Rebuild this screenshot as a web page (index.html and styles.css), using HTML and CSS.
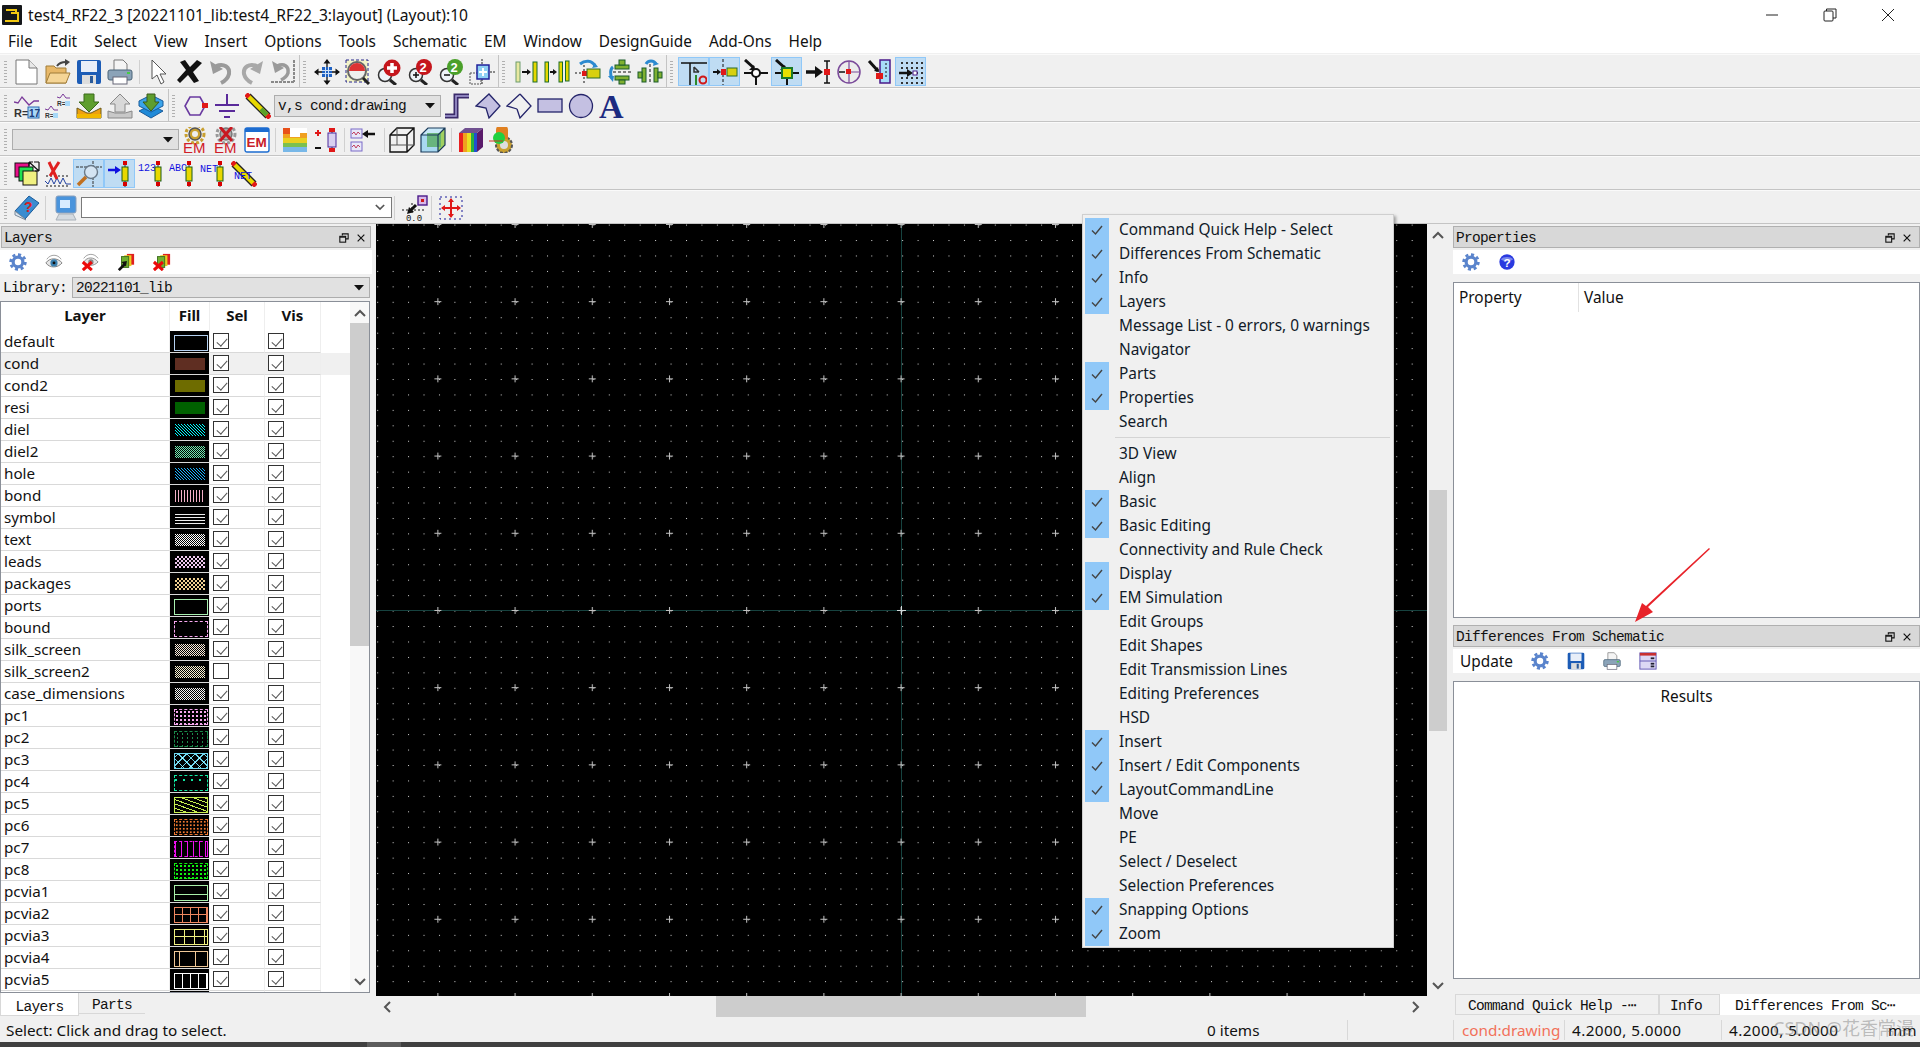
FILE: index.html
```html
<!DOCTYPE html>
<html lang="en">
<head>
<meta charset="utf-8">
<title>test4_RF22_3 Layout</title>
<link rel="stylesheet" href="styles.css">
</head>
<body>
<svg class="sprite" xmlns="http://www.w3.org/2000/svg">
<defs>
<symbol id="new" viewBox="0 0 26 26"><path d="M2 1h13l8 8v16H2z" fill="#fff" stroke="#777"/><path d="M15 1v8h8" fill="#e8e8e8" stroke="#777"/></symbol>
<symbol id="open" viewBox="0 0 26 26"><path d="M1 24V7h8l2 2h10v15z" fill="#e8b868" stroke="#a07c38"/><path d="M1 24l4-10h20l-4 10z" fill="#f5d596" stroke="#a07c38"/><path d="M12 7c2-3 5-4 9-4" stroke="#444" stroke-width="2" fill="none"/><path d="M20 0l5 3-5 4z" fill="#444"/></symbol>
<symbol id="save" viewBox="0 0 26 26"><rect x="1" y="1" width="24" height="24" rx="2" fill="#1c5cb6"/><rect x="5" y="2" width="16" height="11" fill="#e8eef8"/><rect x="6" y="16" width="14" height="9" fill="#ddd"/><rect x="14" y="17" width="3" height="7" fill="#2a5a9a"/></symbol>
<symbol id="print" viewBox="0 0 26 26"><path d="M7 1h9l4 4v7H7z" fill="#f4f4f4" stroke="#7a7a7a"/><rect x="1" y="11" width="24" height="10" rx="2" fill="#8ba3b8" stroke="#4a6478"/><rect x="6" y="18" width="14" height="7" fill="#fff" stroke="#667"/><rect x="20" y="13" width="3" height="2" fill="#4c4"/></symbol>
<symbol id="cursor" viewBox="0 0 26 26"><path d="M6 1l14 14h-6l4 8-3 2-4-9-5 4z" fill="#fff" stroke="#555"/></symbol>
<symbol id="x" viewBox="0 0 26 26"><path d="M3 3l5-2 5 7 7-7 5 3-9 9 6 9-5 2-6-8-8 8-3-3 9-10z" fill="#111"/></symbol>
<symbol id="undo" viewBox="0 0 26 26"><path d="M2 2l3 13 10-5z" fill="#9a9a9a"/><path d="M8 7c8-3 14 1 13 8-1 4-4 7-8 9" stroke="#9a9a9a" stroke-width="4" fill="none"/></symbol>
<symbol id="redo" viewBox="0 0 26 26"><path d="M24 2l-3 13-10-5z" fill="#a8a8a8"/><path d="M18 7c-8-3-14 1-13 8 1 4 4 7 8 9" stroke="#a8a8a8" stroke-width="4" fill="none"/></symbol>
<symbol id="undo2" viewBox="0 0 26 26"><path d="M2 2l3 12 9-5z" fill="#9a9a9a"/><path d="M7 7c7-3 12 0 11 7-1 3-3 5-7 7" stroke="#9a9a9a" stroke-width="3.5" fill="none"/><path d="M24 1v22M1 23h23" stroke="#8a8a8a" stroke-width="2" stroke-dasharray="3 1"/></symbol>
<symbol id="pan" viewBox="0 0 26 26"><path d="M13 1v24M1 13h24" stroke="#111" stroke-width="1.3"/><path d="M13 0l3.500 4.500h-7zM13 26l3.500-4.500h-7zM0 13l4.500-3.500v7zM26 13l-4.500-3.500v7z" fill="#111"/><rect x="8" y="8" width="10" height="10" fill="#1f62c4"/><path d="M11.500 8v10M14.500 8v10M8 11.500h10M8 14.500h10" stroke="#cfe0f5"/></symbol>
<symbol id="zfit" viewBox="0 0 26 26"><rect x="1" y="1" width="22" height="22" fill="#f2f3c8" stroke="#24248a" stroke-dasharray="3 2"/><circle cx="12" cy="12" r="9" fill="#eee" stroke="#666" stroke-width="2"/><path d="M12 12V4a8 8 0 0 0-8 8z" fill="#d33"/><path d="M12 12V4a8 8 0 0 1 8 8z" fill="#d33"/><path d="M18 19l6 6" stroke="#222" stroke-width="3"/></symbol>
<symbol id="zin" viewBox="0 0 26 26"><circle cx="9" cy="16" r="6.500" fill="#eef3f8" stroke="#333" stroke-width="1.5"/><path d="M14 21l6 5" stroke="#222" stroke-width="3"/><circle cx="16" cy="9" r="8.500" fill="#c5161c"/><path d="M16 4v10M11 9h10" stroke="#fff" stroke-width="3.5"/></symbol>
<symbol id="z2" viewBox="0 0 26 26"><circle cx="9" cy="16" r="6.500" fill="#eef3f8" stroke="#333" stroke-width="1.5"/><path d="M14 21l6 5" stroke="#222" stroke-width="3"/><path d="M6 16h6M9 13v6" stroke="#111" stroke-width="1.5"/><circle cx="17" cy="8" r="8" fill="#c5161c"/><text class="it itb" x="12.500" y="13" font-size="13" fill="#fff">2</text></symbol>
<symbol id="z2m" viewBox="0 0 26 26"><circle cx="9" cy="16" r="6.500" fill="#eef3f8" stroke="#333" stroke-width="1.5"/><path d="M14 21l6 5" stroke="#222" stroke-width="3"/><path d="M6 16h6" stroke="#111" stroke-width="1.5"/><circle cx="17" cy="8" r="8" fill="#4aa02a"/><text class="it itb" x="12.500" y="13" font-size="13" fill="#fff">2</text></symbol>
<symbol id="zc" viewBox="0 0 26 26"><path d="M13 0v6M13 20v6M18 13h8" stroke="#222" stroke-dasharray="2 1"/><rect x="1" y="14" width="11" height="11" fill="none" stroke="#555" stroke-dasharray="2 1"/><rect x="8" y="6" width="12" height="14" fill="#8fd0f4" stroke="#20209a" stroke-width="1.5"/><path d="M14 9v8M10 13h8" stroke="#fff" stroke-width="2"/></symbol>

<symbol id="a1" viewBox="0 0 26 26"><rect x="3" y="3" width="4" height="20" fill="#e8e8a0" stroke="#6c9c6c"/><rect x="20" y="3" width="4" height="20" fill="#e6d800" stroke="#1a6a2a"/><path d="M9 13h6" stroke="#111" stroke-width="2"/><path d="M18 13l-4-3v6z" fill="#111"/></symbol>
<symbol id="a2" viewBox="0 0 26 26"><rect x="1" y="3" width="3.500" height="20" fill="#e6d800" stroke="#1a6a2a"/><rect x="15" y="3" width="3.500" height="20" fill="#e6d800" stroke="#1a6a2a"/><rect x="21.500" y="2" width="3.500" height="20" fill="#e6d800" stroke="#1a6a2a"/><path d="M6 13h4" stroke="#111" stroke-width="2"/><path d="M13 13l-4-3v6z" fill="#111"/></symbol>
<symbol id="a3" viewBox="0 0 26 26"><path d="M5 5c5-4 12-4 15 2" stroke="#2c8ad0" stroke-width="3" fill="none"/><path d="M17 9l6-1-3-4z" fill="#2c8ad0"/><path d="M0 14h8M9 6v18" stroke="#111" stroke-dasharray="2 2"/><rect x="7" y="12" width="5" height="5" fill="#e01818"/><rect x="12" y="10" width="13" height="9" fill="#d8d010" stroke="#2a6a2a"/></symbol>
<symbol id="a4" viewBox="0 0 26 26"><path d="M7 8c-3 2-3 8-1 11" stroke="#2c8ad0" stroke-width="3" fill="none"/><path d="M2 17l6 0-1 6z" fill="#2c8ad0"/><rect x="9" y="6" width="14" height="4" fill="#7fb030" stroke="#1a5a2a"/><rect x="13" y="1" width="6" height="5" fill="#7fb030" stroke="#1a5a2a"/><path d="M7 13h19" stroke="#111" stroke-dasharray="3 2"/><rect x="9" y="17" width="14" height="4" fill="#7fb030" stroke="#1a5a2a"/><rect x="13" y="21" width="6" height="4" fill="#7fb030" stroke="#1a5a2a"/></symbol>
<symbol id="a5" viewBox="0 0 26 26"><path d="M9 5c2-4 8-4 10 0" stroke="#2c8ad0" stroke-width="3" fill="none"/><path d="M16 7l6-2-5-3z" fill="#2c8ad0"/><path d="M13 5v20" stroke="#111" stroke-dasharray="3 2"/><rect x="5" y="9" width="4" height="14" fill="#7fb030" stroke="#1a5a2a"/><rect x="1" y="13" width="4" height="6" fill="#7fb030" stroke="#1a5a2a"/><rect x="17" y="9" width="4" height="14" fill="#7fb030" stroke="#1a5a2a"/><rect x="21" y="13" width="4" height="6" fill="#7fb030" stroke="#1a5a2a"/></symbol>
<symbol id="s1" viewBox="0 0 26 26"><path d="M0 4h26M9 4v22" stroke="#111" stroke-width="1.5"/><path d="M13 8l5 5M13 8v5h5" stroke="#333" stroke-width="1.5" fill="none"/><path d="M15 16v10" stroke="#2a8a2a" stroke-width="2"/><circle cx="22" cy="21" r="3.500" fill="none" stroke="#d01818" stroke-width="2"/></symbol>
<symbol id="s2" viewBox="0 0 26 26"><path d="M11 0v26" stroke="#111" stroke-dasharray="3 2"/><path d="M1 13h5" stroke="#111" stroke-width="2"/><path d="M9 13l-4-3v6z" fill="#111"/><rect x="9" y="10" width="5" height="6" fill="#e01818"/><rect x="15" y="9" width="10" height="8" fill="#d8d010" stroke="#2a6a2a"/></symbol>
<symbol id="s3" viewBox="0 0 26 26"><path d="M1 14h24M13 14v12" stroke="#111" stroke-width="2"/><path d="M2 1l9 8" stroke="#111" stroke-width="3"/><path d="M12 11l-6 0 5-5z" fill="#111"/><circle cx="13" cy="14" r="4" fill="#fff" stroke="#111" stroke-width="2"/></symbol>
<symbol id="s4" viewBox="0 0 26 26"><path d="M1 14h24M13 14v12" stroke="#111" stroke-width="2"/><path d="M2 1l9 8" stroke="#111" stroke-width="3"/><path d="M12 11l-6 0 5-5z" fill="#111"/><rect x="8" y="9" width="10" height="10" fill="#e8e000" stroke="#1a7a2a" stroke-width="2"/></symbol>
<symbol id="s5" viewBox="0 0 26 26"><path d="M19 2h6M22 2v22M19 24h6" stroke="#111" stroke-width="1.5"/><path d="M1 13h10" stroke="#111" stroke-width="3.5"/><path d="M18 13l-8-6v12z" fill="#111"/><rect x="19" y="10" width="6" height="6" fill="#e01818"/></symbol>
<symbol id="s6" viewBox="0 0 26 26"><circle cx="13" cy="13" r="11" fill="#ececec" stroke="#7a4a9a" stroke-width="1.5"/><path d="M13 2v22M13 13h11" stroke="#7a4a9a" stroke-width="1.2"/><path d="M3 13h6" stroke="#111" stroke-width="1.5"/><rect x="10" y="10" width="5" height="5" fill="#e01818"/></symbol>
<symbol id="s7" viewBox="0 0 26 26"><rect x="13" y="1" width="10" height="23" fill="#a8ddf8" stroke="#4a1a8a" stroke-width="1.5"/><path d="M19 4v16" stroke="#111" stroke-dasharray="2 2"/><path d="M2 2l9 10" stroke="#111" stroke-width="3"/><path d="M12 13l-5-1 4-4z" fill="#111"/><rect x="9" y="14" width="7" height="6" fill="#e01818"/></symbol>
<symbol id="s8" viewBox="0 0 26 26"><g fill="#333"><rect x="3" y="3" width="2" height="2"/><rect x="8" y="3" width="2" height="2"/><rect x="13" y="3" width="2" height="2"/><rect x="18" y="3" width="2" height="2"/><rect x="23" y="3" width="2" height="2"/><rect x="3" y="8" width="2" height="2"/><rect x="8" y="8" width="2" height="2"/><rect x="13" y="8" width="2" height="2"/><rect x="18" y="8" width="2" height="2"/><rect x="23" y="8" width="2" height="2"/><rect x="18" y="13" width="2" height="2"/><rect x="23" y="13" width="2" height="2"/><rect x="3" y="18" width="2" height="2"/><rect x="8" y="18" width="2" height="2"/><rect x="13" y="18" width="2" height="2"/><rect x="18" y="18" width="2" height="2"/><rect x="23" y="18" width="2" height="2"/><rect x="3" y="23" width="2" height="2"/><rect x="8" y="23" width="2" height="2"/><rect x="13" y="23" width="2" height="2"/><rect x="18" y="23" width="2" height="2"/><rect x="23" y="23" width="2" height="2"/></g><path d="M1 14h9" stroke="#111" stroke-width="2.5"/><path d="M15 14l-6-4v8z" fill="#111"/><rect x="15" y="12" width="4" height="4" fill="#fff" stroke="#4a1a8a"/></symbol>

<symbol id="r17" viewBox="0 0 26 26"><path d="M0 9l4 1 4-6 7 8 5-4h5" stroke="#7a3a9a" stroke-width="1.3" fill="none"/><text class="it itb" x="0" y="24" font-size="11" fill="#333">R=</text><rect x="14" y="14" width="11" height="11" fill="#a8d8f8" stroke="#2a6ab0"/><text class="it itb" x="15" y="24" font-size="10" fill="#1a3a7a">17</text></symbol>
<symbol id="r17s" viewBox="0 0 26 26"><path d="M12 4l3 1 3-4 3 4h4" stroke="#7a3a9a" fill="none"/><text class="it itb" x="12" y="13" font-size="6.500" fill="#333">R=</text><rect x="20" y="8" width="5" height="5" fill="#a8d8f8"/><path d="M0 16l3 1 3-4 3 4h4" stroke="#7a3a9a" fill="none"/><text class="it itb" x="0" y="25" font-size="6.500" fill="#333">R=</text><rect x="8" y="20" width="5" height="5" fill="#a8d8f8"/></symbol>
<symbol id="dn" viewBox="0 0 26 26"><path d="M8 1h10v8h5L13 19 3 9h5z" fill="#5e9e2e" stroke="#3a6a1a"/><path d="M1 15l10 5h4l10-5v10H1z" fill="#eea010" stroke="#6a5a1a"/><rect x="1" y="21" width="24" height="4" fill="#f2b800"/></symbol>
<symbol id="up" viewBox="0 0 26 26"><path d="M13 1l10 10h-5v8H8v-8H3z" fill="#d8d8d8" stroke="#888"/><path d="M1 18l7 2h10l7-2v7H1z" fill="#c8c8c8" stroke="#888"/></symbol>
<symbol id="dnb" viewBox="0 0 26 26"><path d="M13 12l12 6-12 7-12-7z" fill="#1f8ad8" stroke="#185a9a"/><path d="M13 2l12 6v5l-12 6-12-6V8z" fill="#3aa4ea" stroke="#185a9a"/><path d="M9 1h8v8h4l-8 9-8-9h4z" fill="#5e9e2e" stroke="#3a5a1a"/></symbol>
<symbol id="hex" viewBox="0 0 26 26"><path d="M7 4h10l5 9-5 9H7L2 13z" fill="none" stroke="#6a3aa0" stroke-width="1.6"/><rect x="19" y="10" width="6" height="5" fill="#e01818"/></symbol>
<symbol id="gnd" viewBox="0 0 26 26"><path d="M13 1v11M1 12h24M5 18h16M10 24h6" stroke="#5a2a9a" stroke-width="2"/></symbol>
<symbol id="wire" viewBox="0 0 26 26"><path d="M3 3l20 20" stroke="#222" stroke-width="7"/><path d="M3 3l20 20" stroke="#e8d800" stroke-width="4.5"/><path d="M16 16l6 6" stroke="#5aa02a" stroke-width="4.5"/><path d="M1 1l3 3M22 22l3 3" stroke="#e01818" stroke-width="5"/></symbol>
<symbol id="step" viewBox="0 0 26 26"><path d="M1 23h11V3h13" fill="none" stroke="#3a2a6a" stroke-width="5"/><path d="M1 23h11V3h13" fill="none" stroke="#a8a0d8" stroke-width="1.5"/></symbol>
<symbol id="poly" viewBox="0 0 26 26"><path d="M14 1l11 12-11 12-3-10-10-2z" fill="#c4c0e2" stroke="#24246a" stroke-width="1.3"/></symbol>
<symbol id="polyo" viewBox="0 0 26 26"><path d="M14 1l11 12-11 12-3-9" fill="none" stroke="#24246a" stroke-width="1.3"/><path d="M11 16l-10-3L14 1" fill="none" stroke="#24246a" stroke-width="1.3"/></symbol>
<symbol id="rc" viewBox="0 0 26 26"><rect x="1" y="6" width="24" height="13" fill="#c4c0e2" stroke="#24246a" stroke-width="1.3"/></symbol>
<symbol id="ci" viewBox="0 0 26 26"><circle cx="13" cy="13" r="11.500" fill="#c4c0e2" stroke="#24246a" stroke-width="1.3"/></symbol>
<symbol id="aa" viewBox="0 0 26 26"><text class="itser" x="0" y="25" font-size="34" fill="#1c2a80">A</text></symbol>

<symbol id="emg" viewBox="0 0 26 26"><circle cx="13" cy="7" r="6" fill="#c9a030" stroke="#555" stroke-width="1.5"/><circle cx="13" cy="7" r="9" fill="none" stroke="#c9a030" stroke-width="3" stroke-dasharray="3 2"/><circle cx="13" cy="7" r="3" fill="#eee"/><text class="it" x="1" y="26" font-size="15" fill="#d0202a">EM</text></symbol>
<symbol id="emx" viewBox="0 0 26 26"><circle cx="13" cy="7" r="6" fill="#aaa" stroke="#777" stroke-width="1.5"/><circle cx="13" cy="7" r="9" fill="none" stroke="#999" stroke-width="3" stroke-dasharray="3 2"/><path d="M7 0l12 14M19 0L7 14" stroke="#c81820" stroke-width="3"/><text class="it" x="1" y="26" font-size="15" fill="#d0202a">EM</text></symbol>
<symbol id="emb" viewBox="0 0 26 26"><rect x="1" y="1" width="24" height="24" rx="2" fill="#fff" stroke="#1c6cd0" stroke-width="1.4"/><rect x="1" y="1" width="24" height="4" fill="#1c6cd0"/><text class="it itb" x="2.500" y="20" font-size="13.500" fill="#c8202a">EM</text></symbol>
<symbol id="lay" viewBox="0 0 26 26"><rect x="1" y="1" width="24" height="24" fill="#fff"/><path d="M1 1h7v6H1z" fill="#e8501a"/><path d="M18 6h7v5h-7z" fill="#f0a020"/><path d="M1 7h7v4H1zM8 11h17v-1H8z" fill="#f0a020"/><path d="M1 11h24v5H1z" fill="#e8d020"/><path d="M1 16h24v4H1z" fill="#7ac050"/><path d="M1 20h24v5H1z" fill="#78b8e8"/></symbol>
<symbol id="cmp" viewBox="0 0 26 26"><path d="M19 1v24" stroke="#333"/><rect x="16" y="1" width="6" height="4" fill="#e01818"/><rect x="15" y="6" width="8" height="14" fill="#d8d0f0" stroke="#4a2a9a"/><rect x="16" y="21" width="6" height="4" fill="#e01818"/><path d="M2 6h6M5 3v6" stroke="#e01818" stroke-width="2"/><path d="M2 21h6" stroke="#111" stroke-width="2"/></symbol>
<symbol id="cmpa" viewBox="0 0 26 26"><rect x="1" y="2" width="11" height="9" fill="#e8e8f8" stroke="#7a6ac8"/><path d="M2 7l2-2 2 3 2-3 2 2" stroke="#c04060" fill="none"/><rect x="1" y="15" width="11" height="9" fill="#e8e8f8" stroke="#7a6ac8"/><path d="M2 20l2-2 2 3 2-3 2 2" stroke="#c04060" fill="none"/><path d="M17 7h8" stroke="#111" stroke-width="2.5"/><path d="M12 7l6-4v8z" fill="#111"/></symbol>
<symbol id="cube" viewBox="0 0 26 26"><path d="M1 8l7-7h17v17l-7 7H1zM1 8h17v17M18 8l7-7" fill="none" stroke="#111" stroke-width="1.4"/><path d="M8 1v17H1M8 18h17" fill="none" stroke="#555"/></symbol>
<symbol id="cubec" viewBox="0 0 26 26"><path d="M1 8l7-7h17L18 8z" fill="#c8e8f8"/><path d="M18 8l7-7v17l-7 7z" fill="#a0d060"/><rect x="1" y="8" width="17" height="17" fill="#a8d8f0"/><rect x="7" y="6" width="14" height="14" fill="#60b070" opacity=".9"/><path d="M1 8l7-7h17v17l-7 7H1zM1 8h17v17M18 8l7-7" fill="none" stroke="#1a3a5a" stroke-width="1.2"/></symbol>
<symbol id="rain" viewBox="0 0 26 26"><rect x="1" y="6" width="4" height="19" fill="#e82020"/><rect x="5" y="6" width="4" height="19" fill="#f0a020"/><rect x="9" y="6" width="4" height="19" fill="#e8e020"/><rect x="13" y="6" width="3" height="19" fill="#28b040"/><rect x="16" y="6" width="3" height="19" fill="#2050d0"/><path d="M19 6l6-5v19l-6 5z" fill="#5a1a6a"/><path d="M1 6l6-5h18l-6 5z" fill="#705090"/></symbol>
<symbol id="gled" viewBox="0 0 26 26"><circle cx="15" cy="18" r="8" fill="#c9a030" stroke="#555" stroke-dasharray="3 1.5" stroke-width="2"/><circle cx="15" cy="18" r="4" fill="#ddd"/><path d="M7 3a6 6 0 0 1 12 0v9H7z" fill="#e08020"/><circle cx="10" cy="11" r="6" fill="#20d040"/><path d="M0 14h14" stroke="#d03020"/></symbol>

<symbol id="m1" viewBox="0 0 26 26"><rect x="1" y="2" width="14" height="14" fill="#e8108a" stroke="#111"/><rect x="5" y="6" width="14" height="14" fill="#20e050" stroke="#111"/><rect x="9" y="10" width="14" height="14" fill="#f0f080" stroke="#111"/><path d="M15 1l10 9M25 1v5M25 1h-5M15 1v4M15 1h4M25 10v-4M25 10h-4" stroke="#111" stroke-width="1.2" fill="none"/></symbol>
<symbol id="m2" viewBox="0 0 26 26"><path d="M0 20l3 3 3-6 3 6 3-6 3 6 3-6 3 6h5" stroke="#2040a0" fill="none"/><path d="M1 15h24M1 25h24" stroke="#111" stroke-dasharray="2 2"/><path d="M4 1l8 17M14 1L5 15" stroke="#e02020" stroke-width="3"/></symbol>
<symbol id="m3" viewBox="0 0 26 26"><path d="M0 6h26M17 0v26" stroke="#333" stroke-dasharray="3 1"/><circle cx="15" cy="11" r="6.500" fill="#d4e4f2" stroke="#6a7a8a" stroke-width="1.4"/><path d="M10 16l-8 8" stroke="#c07020" stroke-width="3.5"/></symbol>
<symbol id="m4" viewBox="0 0 26 26"><path d="M1 9h8" stroke="#1010e0" stroke-width="2.5"/><path d="M14 9l-6-4v8z" fill="#1010e0"/><path d="M18 0v26" stroke="#333"/><rect x="16" y="0" width="4" height="4" fill="#d80000"/><rect x="15" y="6" width="6" height="14" fill="#e8d800" stroke="#1a5a1a"/><rect x="16" y="21" width="4" height="4" fill="#d80000"/></symbol>
<symbol id="m5" viewBox="0 0 26 26"><text class="itm" x="0" y="10" font-size="10">123</text><path d="M20 0v26" stroke="#333"/><rect x="18" y="0" width="4" height="4" fill="#d80000"/><rect x="17" y="6" width="6" height="14" fill="#e8d800" stroke="#1a5a1a"/><rect x="18" y="21" width="4" height="4" fill="#d80000"/></symbol>
<symbol id="m6" viewBox="0 0 26 26"><text class="itm" x="0" y="10" font-size="10">ABC</text><path d="M20 0v26" stroke="#333"/><rect x="18" y="0" width="4" height="4" fill="#d80000"/><rect x="17" y="6" width="6" height="14" fill="#e8d800" stroke="#1a5a1a"/><rect x="18" y="21" width="4" height="4" fill="#d80000"/></symbol>
<symbol id="m7" viewBox="0 0 26 26"><text class="itm" x="0" y="11" font-size="10">NET</text><path d="M20 0v26" stroke="#333"/><rect x="18" y="0" width="4" height="4" fill="#d80000"/><rect x="17" y="6" width="6" height="14" fill="#e8d800" stroke="#1a5a1a"/><rect x="18" y="21" width="4" height="4" fill="#d80000"/></symbol>
<symbol id="m8" viewBox="0 0 26 26"><path d="M3 3l20 20" stroke="#222" stroke-width="7"/><path d="M3 3l20 20" stroke="#e8d800" stroke-width="4.5"/><path d="M1 1l3 3M22 22l3 3" stroke="#e01818" stroke-width="5"/><text class="itm" x="3" y="18" font-size="10">NET</text></symbol>

<symbol id="book" viewBox="0 0 26 26"><path d="M1 16L15 1l10 7-14 16z" fill="#3a8cd0" stroke="#1a5a9a"/><path d="M1 16l10 8 1 1-11-5z" fill="#d8e4f0" stroke="#7a8a9a"/><text class="it itb" x="10" y="17" font-size="14" fill="#d82020">?</text></symbol>
<symbol id="mon" viewBox="0 0 26 26"><rect x="3" y="1" width="20" height="17" rx="2" fill="#4a94dc" stroke="#8aa0bc"/><rect x="7" y="5" width="10" height="8" fill="#d8ecff"/><path d="M6 19h14l3 6H3z" fill="#d4dae0" stroke="#a8b0b8"/></symbol>
<symbol id="org" viewBox="0 0 26 26"><rect x="16" y="1" width="9" height="9" fill="#d8b8e8" stroke="#4a1a8a" stroke-width="1.4"/><rect x="19" y="4" width="3" height="3" fill="#d01818"/><path d="M14 10l-7 7" stroke="#111" stroke-width="3"/><path d="M5 19l2-7 5 5z" fill="#111"/><path d="M10 8v10M0 15h24" stroke="#111" stroke-dasharray="2 2"/><text class="itmk" x="4" y="26" font-size="9">0,0</text></symbol>
<symbol id="snapb" viewBox="0 0 26 26"><rect x="2" y="2" width="22" height="22" fill="none" stroke="#1a1a9a" stroke-dasharray="2 3"/><path d="M13 4v18M4 13h18" stroke="#e01818" stroke-width="2"/><path d="M13 3l3 4h-6zM13 23l3-4h-6zM3 13l4-3v6zM23 13l-4-3v6z" fill="#e01818"/></symbol>

<symbol id="gear" viewBox="0 0 20 20"><circle cx="10" cy="10" r="5.400" fill="none" stroke="#5a84cc" stroke-width="3.6"/><circle cx="10" cy="10" r="8.200" fill="none" stroke="#5a84cc" stroke-width="3" stroke-dasharray="3.4 3"/></symbol>
<symbol id="eye" viewBox="0 0 20 20"><path d="M1 11c4-6 13-6 18 0-5 6-14 6-18 0z" fill="#e6e6e6" stroke="#777"/><circle cx="10" cy="11" r="4" fill="#3a80b0"/><circle cx="10" cy="11" r="1.600" fill="#111"/><path d="M2 7c4-6 12-6 16 0" fill="none" stroke="#999"/></symbol>
<symbol id="eyex" viewBox="0 0 20 20"><path d="M3 10c4-6 11-6 16 0-5 5-12 5-16 0z" fill="#e6e6e6" stroke="#888"/><path d="M3 6c4-6 12-6 16 0" fill="none" stroke="#999"/><circle cx="11" cy="10" r="3" fill="#888"/><path d="M2 10l10 9M12 10L2 19" stroke="#ec0a0a" stroke-width="3.4"/></symbol>
<symbol id="lyr" viewBox="0 0 20 20"><rect x="11" y="1" width="8" height="12" fill="#e02020"/><rect x="8" y="2.500" width="8" height="12" fill="#e8d020"/><rect x="5" y="4" width="8" height="12" fill="#70b030" stroke="#3a6a1a"/><path d="M2 19l7-7" stroke="#111" stroke-width="3"/><path d="M11 9l-1 6-5-5z" fill="#111"/></symbol>
<symbol id="lyrx" viewBox="0 0 20 20"><rect x="11" y="1" width="8" height="12" fill="#e02020"/><rect x="8" y="2.500" width="8" height="12" fill="#e8d020"/><rect x="5" y="4" width="8" height="12" fill="#70b030" stroke="#3a6a1a"/><path d="M1 10l10 9M11 10L1 19" stroke="#ec0a0a" stroke-width="3.4"/></symbol>
<symbol id="help" viewBox="0 0 20 20"><circle cx="10" cy="10" r="8.500" fill="#2a3ae0"/><path d="M3 7a8 5 0 0 1 14 0 8 4 0 0 1-14 0z" fill="#9aa8f4" opacity=".7"/><text class="it itb" x="6" y="15" font-size="13" fill="#fff">?</text></symbol>
<symbol id="cal" viewBox="0 0 20 20"><rect x="1" y="1" width="18" height="18" fill="#dcd8f4" stroke="#5a50b0"/><rect x="1" y="1" width="18" height="3" fill="#c83030"/><path d="M1 10h18" stroke="#5a50b0"/><rect x="13" y="6" width="4" height="2" fill="#223"/><rect x="13" y="12" width="4" height="2" fill="#223"/><rect x="13" y="15" width="4" height="2" fill="#223"/></symbol>
<symbol id="float" viewBox="0 0 12 12"><path d="M4 3V1h7v6H8" fill="none" stroke="#111" stroke-width="1.3"/><rect x="1" y="4" width="7" height="7" fill="none" stroke="#111" stroke-width="1.3"/><path d="M1 5h7" stroke="#111" stroke-width="1.3"/></symbol>
<symbol id="close" viewBox="0 0 12 12"><path d="M2 2l8 8M10 2l-8 8" stroke="#111" stroke-width="1.4"/></symbol>
<symbol id="chk" viewBox="0 0 14 14"><path d="M2 7.500l3.500 3.500L12 3" fill="none" stroke="#444" stroke-width="1.4"/></symbol>
<symbol id="dd" viewBox="0 0 10 6"><path d="M0 0h10L5 5.500z" fill="#111"/></symbol>
<symbol id="chev" viewBox="0 0 12 8"><path d="M1 7l5-5 5 5" fill="none" stroke="#555" stroke-width="2"/></symbol>
<pattern id="dots" width="15.440" height="15.440" x="1.200" y="0.600" patternUnits="userSpaceOnUse"><rect class="dot" width="1" height="1"/></pattern>
<pattern id="cross" width="77.200" height="77.200" x="58.400" y="-3" patternUnits="userSpaceOnUse"><path class="crs" d="M0 3.500h7M3.500 0v7"/></pattern>
</defs>
</svg>

<div class="app">
  <header class="titlebar">
    <svg class="logo" viewBox="0 0 20 20"><rect width="20" height="20" rx="1" fill="#15171a"/><path d="M4 5h10v3H9M9 8h7v8H3" fill="none" stroke="#f2c811" stroke-width="2"/></svg>
    <span class="title">test4_RF22_3 [20221101_lib:test4_RF22_3:layout] (Layout):10</span>
    <div class="winbtns">
      <svg class="wb" viewBox="0 0 14 14"><path d="M1 7h12" stroke="#222"/></svg>
      <svg class="wb" viewBox="0 0 14 14"><rect x="1" y="3" width="9" height="10" rx="1" fill="#fff" stroke="#222"/><path d="M3.500 3V1h9.500v9h-3" fill="none" stroke="#222"/></svg>
      <svg class="wb" viewBox="0 0 14 14"><path d="M1 1l12 12M13 1L1 13" stroke="#222"/></svg>
    </div>
  </header>

  <nav class="menubar"><span>File</span><span>Edit</span><span>Select</span><span>View</span><span>Insert</span><span>Options</span><span>Tools</span><span>Schematic</span><span>EM</span><span>Window</span><span>DesignGuide</span><span>Add-Ons</span><span>Help</span></nav>

  <div class="tb">
    <i class="hd"></i>
    <span class="b"><svg class="ic"><use href="#new"/></svg></span><span class="b"><svg class="ic"><use href="#open"/></svg></span><span class="b"><svg class="ic"><use href="#save"/></svg></span><span class="b"><svg class="ic"><use href="#print"/></svg></span>
    <i class="sp w8"></i>
    <span class="b"><svg class="ic"><use href="#cursor"/></svg></span><span class="b"><svg class="ic"><use href="#x"/></svg></span><span class="b"><svg class="ic"><use href="#undo"/></svg></span><span class="b"><svg class="ic"><use href="#redo"/></svg></span><span class="b"><svg class="ic"><use href="#undo2"/></svg></span>
    <i class="dv"></i><i class="hd hd2"></i>
    <span class="b"><svg class="ic"><use href="#pan"/></svg></span><span class="b"><svg class="ic"><use href="#zfit"/></svg></span><span class="b"><svg class="ic"><use href="#zin"/></svg></span><span class="b"><svg class="ic"><use href="#z2"/></svg></span><span class="b"><svg class="ic"><use href="#z2m"/></svg></span><span class="b"><svg class="ic"><use href="#zc"/></svg></span>
    <i class="dv"></i><i class="hd hd2"></i>
    <span class="b"><svg class="ic"><use href="#a1"/></svg></span><span class="b"><svg class="ic"><use href="#a2"/></svg></span><span class="b"><svg class="ic"><use href="#a3"/></svg></span><span class="b"><svg class="ic"><use href="#a4"/></svg></span><span class="b"><svg class="ic"><use href="#a5"/></svg></span>
    <i class="dv"></i><i class="hd hd2"></i>
    <span class="b on"><svg class="ic"><use href="#s1"/></svg></span><span class="b on"><svg class="ic"><use href="#s2"/></svg></span><span class="b"><svg class="ic"><use href="#s3"/></svg></span><span class="b on"><svg class="ic"><use href="#s4"/></svg></span><span class="b"><svg class="ic"><use href="#s5"/></svg></span><span class="b"><svg class="ic"><use href="#s6"/></svg></span><span class="b"><svg class="ic"><use href="#s7"/></svg></span><span class="b on"><svg class="ic"><use href="#s8"/></svg></span>
  </div>

  <div class="tb">
    <i class="hd"></i>
    <span class="b"><svg class="ic"><use href="#r17"/></svg></span><span class="b"><svg class="ic"><use href="#r17s"/></svg></span><span class="b"><svg class="ic"><use href="#dn"/></svg></span><span class="b"><svg class="ic"><use href="#up"/></svg></span><span class="b"><svg class="ic"><use href="#dnb"/></svg></span>
    <i class="dv dv2"></i><i class="hd hd2"></i>
    <span class="b"><svg class="ic"><use href="#hex"/></svg></span><span class="b"><svg class="ic"><use href="#gnd"/></svg></span><span class="b"><svg class="ic"><use href="#wire"/></svg></span>
    <div class="combo c-layer"><span>v,s cond:drawing</span><svg class="dd"><use href="#dd"/></svg></div>
    <span class="b"><svg class="ic"><use href="#step"/></svg></span><span class="b"><svg class="ic"><use href="#poly"/></svg></span><span class="b"><svg class="ic"><use href="#polyo"/></svg></span><span class="b"><svg class="ic"><use href="#rc"/></svg></span><span class="b"><svg class="ic"><use href="#ci"/></svg></span><span class="b"><svg class="ic"><use href="#aa"/></svg></span>
  </div>

  <div class="tb">
    <i class="hd"></i>
    <div class="combo c-em"><span></span><svg class="dd"><use href="#dd"/></svg></div>
    <span class="b"><svg class="ic"><use href="#emg"/></svg></span><span class="b"><svg class="ic"><use href="#emx"/></svg></span><span class="b"><svg class="ic"><use href="#emb"/></svg></span>
    <i class="sp w7"></i>
    <span class="b"><svg class="ic"><use href="#lay"/></svg></span><span class="b"><svg class="ic"><use href="#cmp"/></svg></span>
    <i class="sp w6"></i>
    <span class="b b-wide"><svg class="ic"><use href="#cmpa"/></svg></span>
    <i class="sp w5"></i>
    <span class="b"><svg class="ic"><use href="#cube"/></svg></span><span class="b"><svg class="ic"><use href="#cubec"/></svg></span>
    <i class="sp w3"></i>
    <span class="b"><svg class="ic"><use href="#rain"/></svg></span><span class="b"><svg class="ic"><use href="#gled"/></svg></span>
  </div>

  <div class="tb">
    <i class="hd"></i>
    <span class="b"><svg class="ic"><use href="#m1"/></svg></span><span class="b"><svg class="ic"><use href="#m2"/></svg></span><span class="b on"><svg class="ic"><use href="#m3"/></svg></span><span class="b on"><svg class="ic"><use href="#m4"/></svg></span><span class="b"><svg class="ic"><use href="#m5"/></svg></span><span class="b"><svg class="ic"><use href="#m6"/></svg></span><span class="b"><svg class="ic"><use href="#m7"/></svg></span><span class="b"><svg class="ic"><use href="#m8"/></svg></span>
  </div>

  <div class="tb">
    <i class="hd"></i>
    <span class="b"><svg class="ic"><use href="#book"/></svg></span>
    <i class="sp w4"></i>
    <span class="b b-nar"><svg class="ic"><use href="#mon"/></svg></span>
    <div class="cmdbox"><svg class="cv"><use href="#chev"/></svg></div>
    <i class="sp w3b"></i>
    <span class="b"><svg class="ic"><use href="#org"/></svg></span>
    <i class="sp w3c"></i>
    <span class="b"><svg class="ic"><use href="#snapb"/></svg></span>
  </div>

  <main class="work">
    <aside class="ldock">
      <div class="dtitle"><span>Layers</span><svg class="dbtn"><use href="#float"/></svg><svg class="dbtn"><use href="#close"/></svg></div>
      <div class="dtools">
        <span class="t"><svg class="ti"><use href="#gear"/></svg></span><span class="t"><svg class="ti"><use href="#eye"/></svg></span><span class="t"><svg class="ti"><use href="#eyex"/></svg></span><span class="t"><svg class="ti"><use href="#lyr"/></svg></span><span class="t"><svg class="ti"><use href="#lyrx"/></svg></span>
      </div>
      <div class="libr"><span class="mono">Library:</span><div class="combo c-lib"><span>20221101_lib</span><svg class="dd"><use href="#dd"/></svg></div></div>
      <div class="ltable">
        <div class="lcols">
          <div class="lhead"><span class="ln">Layer</span><span class="lf">Fill</span><span class="ls">Sel</span><span class="lv">Vis</span></div>
          <div class="lbody">
            <div class="lrow"><span class="ln">default</span><span class="lf"><i class="sw f-default"></i></span><span class="ls"><i class="cb on"></i></span><span class="lv"><i class="cb on"></i></span></div>
            <div class="lrow alt"><span class="ln">cond</span><span class="lf"><i class="sw f-cond"></i></span><span class="ls"><i class="cb on"></i></span><span class="lv"><i class="cb on"></i></span></div>
            <div class="lrow"><span class="ln">cond2</span><span class="lf"><i class="sw f-cond2"></i></span><span class="ls"><i class="cb on"></i></span><span class="lv"><i class="cb on"></i></span></div>
            <div class="lrow"><span class="ln">resi</span><span class="lf"><i class="sw f-resi"></i></span><span class="ls"><i class="cb on"></i></span><span class="lv"><i class="cb on"></i></span></div>
            <div class="lrow"><span class="ln">diel</span><span class="lf"><i class="sw f-diel"></i></span><span class="ls"><i class="cb on"></i></span><span class="lv"><i class="cb on"></i></span></div>
            <div class="lrow"><span class="ln">diel2</span><span class="lf"><i class="sw f-diel2"></i></span><span class="ls"><i class="cb on"></i></span><span class="lv"><i class="cb on"></i></span></div>
            <div class="lrow"><span class="ln">hole</span><span class="lf"><i class="sw f-hole"></i></span><span class="ls"><i class="cb on"></i></span><span class="lv"><i class="cb on"></i></span></div>
            <div class="lrow"><span class="ln">bond</span><span class="lf"><i class="sw f-bond"></i></span><span class="ls"><i class="cb on"></i></span><span class="lv"><i class="cb on"></i></span></div>
            <div class="lrow"><span class="ln">symbol</span><span class="lf"><i class="sw f-symbol"></i></span><span class="ls"><i class="cb on"></i></span><span class="lv"><i class="cb on"></i></span></div>
            <div class="lrow"><span class="ln">text</span><span class="lf"><i class="sw f-text"></i></span><span class="ls"><i class="cb on"></i></span><span class="lv"><i class="cb on"></i></span></div>
            <div class="lrow"><span class="ln">leads</span><span class="lf"><i class="sw f-leads"></i></span><span class="ls"><i class="cb on"></i></span><span class="lv"><i class="cb on"></i></span></div>
            <div class="lrow"><span class="ln">packages</span><span class="lf"><i class="sw f-packages"></i></span><span class="ls"><i class="cb on"></i></span><span class="lv"><i class="cb on"></i></span></div>
            <div class="lrow"><span class="ln">ports</span><span class="lf"><i class="sw f-ports"></i></span><span class="ls"><i class="cb on"></i></span><span class="lv"><i class="cb on"></i></span></div>
            <div class="lrow"><span class="ln">bound</span><span class="lf"><i class="sw f-bound"></i></span><span class="ls"><i class="cb on"></i></span><span class="lv"><i class="cb on"></i></span></div>
            <div class="lrow"><span class="ln">silk_screen</span><span class="lf"><i class="sw f-silk"></i></span><span class="ls"><i class="cb on"></i></span><span class="lv"><i class="cb on"></i></span></div>
            <div class="lrow"><span class="ln">silk_screen2</span><span class="lf"><i class="sw f-silk2"></i></span><span class="ls"><i class="cb"></i></span><span class="lv"><i class="cb"></i></span></div>
            <div class="lrow"><span class="ln">case_dimensions</span><span class="lf"><i class="sw f-case"></i></span><span class="ls"><i class="cb on"></i></span><span class="lv"><i class="cb on"></i></span></div>
            <div class="lrow"><span class="ln">pc1</span><span class="lf"><i class="sw f-pc1"></i></span><span class="ls"><i class="cb on"></i></span><span class="lv"><i class="cb on"></i></span></div>
            <div class="lrow"><span class="ln">pc2</span><span class="lf"><i class="sw f-pc2"></i></span><span class="ls"><i class="cb on"></i></span><span class="lv"><i class="cb on"></i></span></div>
            <div class="lrow"><span class="ln">pc3</span><span class="lf"><i class="sw f-pc3"></i></span><span class="ls"><i class="cb on"></i></span><span class="lv"><i class="cb on"></i></span></div>
            <div class="lrow"><span class="ln">pc4</span><span class="lf"><i class="sw f-pc4"></i></span><span class="ls"><i class="cb on"></i></span><span class="lv"><i class="cb on"></i></span></div>
            <div class="lrow"><span class="ln">pc5</span><span class="lf"><i class="sw f-pc5"></i></span><span class="ls"><i class="cb on"></i></span><span class="lv"><i class="cb on"></i></span></div>
            <div class="lrow"><span class="ln">pc6</span><span class="lf"><i class="sw f-pc6"></i></span><span class="ls"><i class="cb on"></i></span><span class="lv"><i class="cb on"></i></span></div>
            <div class="lrow"><span class="ln">pc7</span><span class="lf"><i class="sw f-pc7"></i></span><span class="ls"><i class="cb on"></i></span><span class="lv"><i class="cb on"></i></span></div>
            <div class="lrow"><span class="ln">pc8</span><span class="lf"><i class="sw f-pc8"></i></span><span class="ls"><i class="cb on"></i></span><span class="lv"><i class="cb on"></i></span></div>
            <div class="lrow"><span class="ln">pcvia1</span><span class="lf"><i class="sw f-v1"></i></span><span class="ls"><i class="cb on"></i></span><span class="lv"><i class="cb on"></i></span></div>
            <div class="lrow"><span class="ln">pcvia2</span><span class="lf"><i class="sw f-v2"></i></span><span class="ls"><i class="cb on"></i></span><span class="lv"><i class="cb on"></i></span></div>
            <div class="lrow"><span class="ln">pcvia3</span><span class="lf"><i class="sw f-v3"></i></span><span class="ls"><i class="cb on"></i></span><span class="lv"><i class="cb on"></i></span></div>
            <div class="lrow"><span class="ln">pcvia4</span><span class="lf"><i class="sw f-v4"></i></span><span class="ls"><i class="cb on"></i></span><span class="lv"><i class="cb on"></i></span></div>
            <div class="lrow"><span class="ln">pcvia5</span><span class="lf"><i class="sw f-v5"></i></span><span class="ls"><i class="cb on"></i></span><span class="lv"><i class="cb on"></i></span></div>
            <div class="lrow"><span class="ln"></span><span class="lf"><i class="sw"></i></span><span class="ls"></span><span class="lv"></span></div>
          </div>
        </div>
        <div class="lscroll"><svg class="chev"><use href="#chev"/></svg><i class="lthumb"></i><i class="fill"></i><svg class="chev flip"><use href="#chev"/></svg></div>
      </div>
      <div class="ltabs"><span class="tab cur">Layers</span><span class="tab">Parts</span></div>
    </aside>

    <section class="center">
      <div class="canvasrow">
        <svg class="canvas" width="1051" height="772">
          <rect width="1051" height="772" class="cbg"/>
          <rect width="1051" height="772" fill="url(#dots)"/>
          <path class="axis" d="M0 386.500h1051M525.500 0v772"/>
          <rect width="1051" height="772" fill="url(#cross)"/>
          <path class="origin" d="M521 386.500h9M525.500 382v9"/>
        </svg>
        <div class="vscroll"><svg class="chev"><use href="#chev"/></svg><i class="vgap"></i><i class="vthumb"></i><i class="fill"></i><svg class="chev flip"><use href="#chev"/></svg></div>
      </div>
      <div class="hscroll"><svg class="hchev left"><use href="#chev"/></svg><i class="hthumb"></i><i class="fill"></i><svg class="hchev right"><use href="#chev"/></svg></div>
    </section>

    <aside class="rdock">
      <div class="dtitle"><span>Properties</span><svg class="dbtn"><use href="#float"/></svg><svg class="dbtn"><use href="#close"/></svg></div>
      <div class="dtools">
        <span class="t"><svg class="ti"><use href="#gear"/></svg></span><span class="t"><svg class="ti"><use href="#help"/></svg></span>
      </div>
      <div class="ptable"><div class="phead"><span class="pp">Property</span><span class="pv">Value</span></div></div>
      <div class="dtitle dt2"><span>Differences From Schematic</span><svg class="dbtn"><use href="#float"/></svg><svg class="dbtn"><use href="#close"/></svg></div>
      <div class="dtools">
        <span class="upd">Update</span>
        <span class="t"><svg class="ti"><use href="#gear"/></svg></span><span class="t"><svg class="ti"><use href="#save"/></svg></span><span class="t"><svg class="ti"><use href="#print"/></svg></span><span class="t"><svg class="ti"><use href="#cal"/></svg></span>
      </div>
      <div class="rtable"><div class="rhead">Results</div></div>
      <div class="rtabs"><span class="rt r1">Command Quick Help -⋯</span><span class="rt r2">Info</span><span class="rt r3">Differences From Sc⋯</span></div>
    </aside>
  </main>

  <footer class="status">
    <span class="st s-a">Select: Click and drag to select.</span>
    <span class="st s-b">0 items</span>
    <span class="st s-c"></span>
    <span class="st s-d">cond:drawing</span>
    <span class="st s-e">4.2000, 5.0000</span>
    <span class="st s-f">4.2000, 5.0000</span>
    <span class="st s-g">mm</span>
  </footer>
  <div class="taskbar"><i></i></div>

  <div class="ctxmenu">
    <div class="mi ck"><span class="mc"><svg class="mk"><use href="#chk"/></svg></span>Command Quick Help - Select</div>
    <div class="mi ck"><span class="mc"><svg class="mk"><use href="#chk"/></svg></span>Differences From Schematic</div>
    <div class="mi ck"><span class="mc"><svg class="mk"><use href="#chk"/></svg></span>Info</div>
    <div class="mi ck"><span class="mc"><svg class="mk"><use href="#chk"/></svg></span>Layers</div>
    <div class="mi"><span class="mc"></span>Message List - 0 errors, 0 warnings</div>
    <div class="mi"><span class="mc"></span>Navigator</div>
    <div class="mi ck"><span class="mc"><svg class="mk"><use href="#chk"/></svg></span>Parts</div>
    <div class="mi ck"><span class="mc"><svg class="mk"><use href="#chk"/></svg></span>Properties</div>
    <div class="mi"><span class="mc"></span>Search</div>
    <div class="msep"></div>
    <div class="mi"><span class="mc"></span>3D View</div>
    <div class="mi"><span class="mc"></span>Align</div>
    <div class="mi ck"><span class="mc"><svg class="mk"><use href="#chk"/></svg></span>Basic</div>
    <div class="mi ck"><span class="mc"><svg class="mk"><use href="#chk"/></svg></span>Basic Editing</div>
    <div class="mi"><span class="mc"></span>Connectivity and Rule Check</div>
    <div class="mi ck"><span class="mc"><svg class="mk"><use href="#chk"/></svg></span>Display</div>
    <div class="mi ck"><span class="mc"><svg class="mk"><use href="#chk"/></svg></span>EM Simulation</div>
    <div class="mi"><span class="mc"></span>Edit Groups</div>
    <div class="mi"><span class="mc"></span>Edit Shapes</div>
    <div class="mi"><span class="mc"></span>Edit Transmission Lines</div>
    <div class="mi"><span class="mc"></span>Editing Preferences</div>
    <div class="mi"><span class="mc"></span>HSD</div>
    <div class="mi ck"><span class="mc"><svg class="mk"><use href="#chk"/></svg></span>Insert</div>
    <div class="mi ck"><span class="mc"><svg class="mk"><use href="#chk"/></svg></span>Insert / Edit Components</div>
    <div class="mi ck"><span class="mc"><svg class="mk"><use href="#chk"/></svg></span>LayoutCommandLine</div>
    <div class="mi"><span class="mc"></span>Move</div>
    <div class="mi"><span class="mc"></span>PE</div>
    <div class="mi"><span class="mc"></span>Select / Deselect</div>
    <div class="mi"><span class="mc"></span>Selection Preferences</div>
    <div class="mi ck"><span class="mc"><svg class="mk"><use href="#chk"/></svg></span>Snapping Options</div>
    <div class="mi ck"><span class="mc"><svg class="mk"><use href="#chk"/></svg></span>Zoom</div>
  </div>

  <svg class="redarrow" viewBox="0 0 80 76"><path d="M76 1L14 59l5 5L1 74l7-19 4 3L75 0z" fill="#e8232a"/></svg>
  <span class="wm">CSDN @花香常漫</span>
</div>
</body>
</html>
```
FILE: styles.css
```css
* { box-sizing: border-box; }
html, body { margin: 0; padding: 0; }
body { width: 1920px; height: 1047px; overflow: hidden; background: #f0f0f0; color: #111; font-family: "Noto Sans", "Noto Sans CJK SC", sans-serif; font-size: 15.400px; }
i { display: block; font-style: normal; }
.sprite { position: absolute; width: 0; height: 0; }
.it { font-family: "Liberation Sans", sans-serif; }
.itb { font-weight: 700; }
.itser { font-family: "Liberation Serif", serif; font-weight: 700; }
.itm { font-family: "Liberation Mono", monospace; fill: #1010e0; }
.itmk { font-family: "Liberation Mono", monospace; fill: #111; }
.app { position: relative; width: 1920px; height: 1047px; display: flex; flex-direction: column; }

.titlebar { height: 30px; background: #fff; display: flex; align-items: center; padding-left: 2px; }
.logo { width: 20px; height: 20px; margin-right: 6px; }
.title { font-size: 15.650px; line-height: 30px; }
.winbtns { margin-left: auto; display: flex; padding-right: 3px; }
.wb { width: 14px; height: 14px; margin: 0 22px; }

.menubar { height: 24px; background: #fff; display: flex; gap: 17px; padding-left: 8px; font-size: 15.400px; line-height: 24px; border-bottom: 1px solid #f0f0f0; }

.tb { height: 34px; background: #f0f0f0; border-bottom: 1px solid #c4c4c4; border-top: 1px solid #fafafa; padding-top: 1px; display: flex; align-items: center; position: relative; }
.hd { width: 3px; height: 24px; margin-left: 4px; margin-right: 4px; background-image: radial-gradient(circle, #b0b0b0 45%, transparent 50%); background-size: 2px 3px; }
.hd2 { margin-left: 3px; margin-right: 5px; }
.b { width: 31px; height: 29px; display: flex; align-items: center; justify-content: center; flex: none; }
.b.on { background: #bfdcf3; box-shadow: inset 0 0 0 1px #90c8f8; }
.b-wide { width: 34px; }
.b-nar { width: 31px; }
.ic { width: 26px; height: 26px; }
.sp { width: 1px; height: 24px; background: #d0d0d0; flex: none; }
.w8 { margin: 0 3px 0 4px; width: 1px; }
.w7 { margin: 0 3px 0 3px; }
.w6 { margin: 0 1px 0 3px; }
.w5 { margin: 0 1px 0 4px; }
.w3 { margin: 0 3px 0 3px; }
.w4 { margin: 0 4px 0 3px; }
.w3b { margin: 0 4px 0 2px; }
.w3c { margin: 0 3px 0 1px; }
.dv { width: 1px; height: 33px; background: #c4c4c4; margin-left: 1px; flex: none; }
.dv2 { margin-left: 2px; }

.combo { display: flex; align-items: center; background: #e1e1e1; border: 1px solid #adadad; font-family: "Liberation Mono", monospace; font-size: 14.500px; letter-spacing: -0.7px; padding: 0 5px 0 3px; }
.combo span { flex: 1; white-space: pre; }
.dd { width: 10px; height: 6px; flex: none; }
.c-layer { width: 167px; height: 22px; margin-left: 1px; }
.c-em { width: 167px; height: 21px; margin-left: 1px; margin-right: 0; }
.c-lib { width: 298px; height: 21px; flex: none; }
.cmdbox { width: 311px; height: 21px; background: #fff; border: 1px solid #7a7a7a; display: flex; align-items: center; justify-content: flex-end; padding-right: 6px; }
.cv { width: 10px; height: 7px; transform: rotate(180deg); }

.work { height: 793px; display: flex; flex: none; }
.ldock { width: 372px; padding: 2px 0 0 0; display: flex; flex-direction: column; flex: none; }
.dtitle { height: 22px; background: #d8d8d8; border: 1px solid #b0b0b0; margin-left: 1px; margin-right: 1px; padding-top: 2px; display: flex; align-items: center; font-family: "Liberation Mono", monospace; font-size: 14.500px; letter-spacing: -0.7px; padding-left: 2px; flex: none; }
.dtitle span { flex: 1; }
.dbtn { width: 10px; height: 10px; margin-right: 7px; flex: none; }
.ldock .dbtn:last-child { margin-right: 4px; }
.dtools { height: 24px; background: #fff; margin-top: 2px; display: flex; align-items: center; flex: none; }
.t { width: 36px; height: 24px; display: flex; align-items: center; justify-content: center; flex: none; }
.ti { width: 18px; height: 18px; }
.libr { height: 21px; margin-top: 3px; display: flex; align-items: center; gap: 5px; padding-left: 3px; flex: none; }
.mono { font-family: "Liberation Mono", monospace; font-size: 14.500px; letter-spacing: -0.7px; }

.ltable { height: 692px; margin: 3px 2px 0 0; background: #fff; border: 1px solid #8a8f98; display: flex; flex: none; }
.lcols { width: 349px; display: flex; flex-direction: column; overflow: hidden; }
.lhead { height: 29px; display: flex; font-weight: 700; line-height: 27px; text-align: center; flex: none; }
.lbody { flex: 1; overflow: hidden; }
.lrow { height: 22px; display: flex; align-items: stretch; line-height: 21px; }
.lrow.alt { background: #f0f0f0; }
.ln { width: 169px; flex: none; padding-left: 3px; border-bottom: 1px solid #d9d9d9; border-right: 1px solid #eee; font-size: 15.200px; white-space: nowrap; }
.lhead .ln, .lhead .lf, .lhead .ls, .lhead .lv { padding: 0; border-bottom: 0; font-size: 15px; }
.lf { width: 40px; flex: none; display: flex; background: #fff; border-bottom: 1px solid #d9d9d9; border-right: 1px solid #eee; }
.lhead .lf { display: block; }
.ls { width: 55px; flex: none; border-bottom: 1px solid #d9d9d9; border-right: 1px solid #eee; padding: 2px 0 0 3px; }
.lv { width: 56px; flex: none; border-bottom: 1px solid #d9d9d9; border-right: 1px solid #eee; padding: 2px 0 0 3px; }
.cb { width: 16px; height: 16px; border: 1px solid #333; background: #fff; position: relative; }
.cb.on::after { content: ""; position: absolute; left: 4.500px; top: 1.500px; width: 5px; height: 9px; border: solid #555; border-width: 0 1.500px 1.500px 0; transform: rotate(42deg); }
.sw { width: 39px; height: 21px; background-color: #000; position: relative; display: block; }
.sw::after { content: ""; position: absolute; left: 5px; top: 5px; width: 30px; height: 12px; }
.f-default::after { left: 4px; top: 4px; width: 32px; height: 14px; border: 1px solid #b4d0f0; }
.f-cond::after { background: #5f2e22; }
.f-cond2::after { background: #6e6c00; }
.f-resi::after { background: #006000; }
.f-diel::after { background-image: url("data:image/svg+xml,%3Csvg xmlns='http://www.w3.org/2000/svg' width='3' height='3' shape-rendering='crispEdges'%3E%3Cpath fill='%2300ffff' d='M0 0h1v1H0zM1 1h1v1H1zM2 2h1v1H2z'/%3E%3C/svg%3E"); }
.f-diel2::after { background-image: url("data:image/svg+xml,%3Csvg xmlns='http://www.w3.org/2000/svg' width='2' height='2' shape-rendering='crispEdges'%3E%3Cpath fill='%2370e8b0' d='M0 0h1v1H0zM1 1h1v1H1z'/%3E%3C/svg%3E"); }
.f-hole::after { background-image: url("data:image/svg+xml,%3Csvg xmlns='http://www.w3.org/2000/svg' width='3' height='3' shape-rendering='crispEdges'%3E%3Cpath fill='%231ab0ff' d='M0 0h1v1H0zM1 1h1v1H1zM2 2h1v1H2z'/%3E%3C/svg%3E"); }
.f-bond::after { background: repeating-linear-gradient(90deg, #f4b0c8 0 1px, #000 1px 3px); }
.f-symbol::after { background: repeating-linear-gradient(0deg, #eee 0 1px, #000 1px 3px); }
.f-text::after { background-image: url("data:image/svg+xml,%3Csvg xmlns='http://www.w3.org/2000/svg' width='2' height='2' shape-rendering='crispEdges'%3E%3Cpath fill='%23ffffff' d='M0 0h1v1H0zM1 1h1v1H1z'/%3E%3C/svg%3E"); }
.f-leads::after { background: repeating-conic-gradient(#f0c8f0 0 25%, #000 0 50%) 0 0 / 4px 4px; }
.f-packages::after { background: repeating-conic-gradient(#f0d090 0 25%, #000 0 50%) 0 0 / 4px 4px; }
.f-ports::after { left: 4px; top: 4px; width: 32px; height: 14px; border: 1px solid #a8f0b0; }
.f-bound::after { left: 4px; top: 4px; width: 32px; height: 14px; border: 1px dashed #f8a8f0; }
.f-silk::after { background-image: url("data:image/svg+xml,%3Csvg xmlns='http://www.w3.org/2000/svg' width='2' height='2' shape-rendering='crispEdges'%3E%3Cpath fill='%23f8e8d8' d='M0 0h1v1H0zM1 1h1v1H1z'/%3E%3C/svg%3E"); }
.f-silk2::after { background-image: url("data:image/svg+xml,%3Csvg xmlns='http://www.w3.org/2000/svg' width='2' height='2' shape-rendering='crispEdges'%3E%3Cpath fill='%23f8f0d0' d='M0 0h1v1H0zM1 1h1v1H1z'/%3E%3C/svg%3E"); }
.f-case::after { background-image: url("data:image/svg+xml,%3Csvg xmlns='http://www.w3.org/2000/svg' width='2' height='2' shape-rendering='crispEdges'%3E%3Cpath fill='%23f4f4f4' d='M0 0h1v1H0zM1 1h1v1H1z'/%3E%3C/svg%3E"); }
.f-pc1::after, .f-pc2::after, .f-pc3::after, .f-pc4::after, .f-pc5::after, .f-pc6::after, .f-pc7::after, .f-pc8::after, .f-v1::after, .f-v2::after, .f-v3::after, .f-v4::after, .f-v5::after { left: 4px; top: 4px; width: 32px; height: 14px; border: 1px solid; }
.f-pc1::after { border-color: #f8a8f0; border-style: dashed; background: radial-gradient(#f8a8f0 1px, transparent 1.200px) 0 0 / 4px 4px; }
.f-pc2::after { border-color: #1a8a4a; border-style: dashed; background: radial-gradient(#1a8a4a .8px, transparent 1px) 0 0 / 5px 4px; }
.f-pc3::after { border-color: #70d8f0; background: repeating-linear-gradient(45deg, #70d8f0 0 1px, #000 1px 6px), repeating-linear-gradient(-45deg, #70d8f0 0 1px, #000 1px 6px); background-blend-mode: screen; }
.f-pc4::after { border-color: #10e8a0; border-style: dashed; background: repeating-linear-gradient(90deg, #10e8a0 0 2px, #000 2px 8px) 0 3px / 100% 2px no-repeat; }
.f-pc5::after { border-color: #c8f050; background: repeating-linear-gradient(-160deg, #c8f050 0 1px, #000 1px 4px); }
.f-pc6::after { border-color: #f07830; border-style: dashed; background: radial-gradient(#f07830 .9px, transparent 1.100px) 0 0 / 3.500px 3.500px; }
.f-pc7::after { border-color: #f010f0; border-style: dashed; background: repeating-linear-gradient(90deg, #f010f0 0 1.500px, #000 1.500px 6px); }
.f-pc8::after { border-color: #10f010; border-style: dashed; background: radial-gradient(#10f010 1px, transparent 1.200px) 0 0 / 4px 4px; }
.f-v1::after { border-color: #a8f0a8; background: linear-gradient(#a8f0a8, #a8f0a8) 0 8px / 100% 1px no-repeat; }
.f-v2::after { border-color: #f08860; background: repeating-linear-gradient(90deg, transparent 0 7px, #f08860 7px 8px), linear-gradient(#f08860, #f08860) 0 6px / 100% 1px no-repeat; }
.f-v3::after { border-color: #f0f080; background: repeating-linear-gradient(90deg, transparent 0 9px, #f0f080 9px 10px), linear-gradient(#f0f080, #f0f080) 0 6px / 100% 1px no-repeat; }
.f-v4::after { border-color: #f0c898; background: linear-gradient(#f0c898, #f0c898) 4px 0 / 1px 100% no-repeat, linear-gradient(#f0c898, #f0c898) 20px 0 / 1px 100% no-repeat; }
.f-v5::after { border-color: #fff; background: repeating-linear-gradient(90deg, transparent 0 7px, #fff 7px 8px); }

.lscroll { width: 20px; background: #f8f8f8; display: flex; flex-direction: column; align-items: center; margin-left: 0; flex: 1; }
.chev { width: 12px; height: 8px; margin: 7px 0 6px; flex: none; }
.flip { transform: rotate(180deg); }
.lthumb { width: 100%; height: 323px; background: #cdcdcd; flex: none; }
.fill { flex: 1; }

.ltabs { height: 24px; display: flex; margin-right: 2px; flex: none; }
.tab { font-family: "Liberation Mono", monospace; font-size: 14.500px; letter-spacing: -0.7px; padding: 0; width: 66px; height: 21px; line-height: 24px; text-align: center; border-bottom: 1px solid #d8d8d8; }
.tab.cur { width: 79px; height: 23px; background: #fff; border: 1px solid #d8d8d8; border-top: 0; line-height: 28px; }

.center { width: 1077px; margin-left: 4px; flex: none; display: flex; flex-direction: column; }
.canvasrow { height: 772px; display: flex; flex: none; }
.canvas { display: block; width: 1051px; height: 772px; shape-rendering: crispEdges; flex: none; }
.cbg { fill: #000; }
.dot { fill: #d8d8d8; }
.crs { stroke: #c4c4c4; stroke-width: 1; fill: none; }
.axis { stroke: #16423f; stroke-width: 1; fill: none; }
.origin { stroke: #cfdada; stroke-width: 1; fill: none; }
.vscroll { width: 22px; display: flex; flex-direction: column; align-items: center; flex: none; }
.vgap { height: 245px; flex: none; }
.vthumb { width: 18px; height: 241px; background: #cdcdcd; flex: none; }
.hscroll { height: 21px; width: 1051px; display: flex; align-items: center; padding: 0 5px; flex: none; }
.hchev { width: 12px; height: 8px; flex: none; }
.hchev.left { transform: rotate(-90deg); }
.hchev.right { transform: rotate(90deg); }
.hthumb { width: 370px; height: 21px; background: #cdcdcd; margin-left: 323px; flex: none; }

.rdock { width: 467px; margin-left: 0; padding-top: 2px; display: flex; flex-direction: column; flex: none; }
.rdock .dtitle { margin: 0; }
.ptable { height: 336px; margin-top: 8px; background: #fff; border: 1px solid #8a8f98; flex: none; }
.phead { height: 29px; display: flex; line-height: 29px; font-size: 15.400px; }
.pp { width: 125px; padding-left: 5px; border-right: 1px solid #e2e2e2; }
.pv { padding-left: 5px; }
.rdock .dt2 { margin-top: 7px; }
.upd { width: 70px; padding-left: 7px; font-size: 15.400px; }
.upd + .t { margin-left: -1px; }
.rtable { height: 298px; margin-top: 8px; background: #fff; border: 1px solid #8a8f98; flex: none; }
.rhead { text-align: center; line-height: 29px; font-size: 15.400px; }
.rtabs { margin-top: 15px; height: 21px; display: flex; flex: none; font-family: "Liberation Mono", monospace; font-size: 14.500px; letter-spacing: -0.7px; line-height: 23px; }
.rt { border: 1px solid #d8d8d8; white-space: nowrap; padding-left: 12px; overflow: hidden; }
.r1 { width: 204px; margin-left: 2px; }
.r2 { width: 61px; padding-left: 10px; }
.r3 { width: 200px; background: #fff; line-height: 25px; padding-left: 15px; border: 0; }

.status { height: 25px; display: flex; align-items: center; font-size: 15.300px; flex: none; }
.st { height: 20px; line-height: 20px; padding-left: 7px; border-left: 1px solid #d8d8d8; white-space: nowrap; flex: none; }
.s-a { width: 1200px; border-left: 0; padding-left: 6px; }
.s-b { width: 147px; border-left: 0; }
.s-c { width: 106px; }
.s-d { width: 111px; padding-left: 8px; color: #f2705a; }
.s-e { width: 157px; letter-spacing: .4px; }
.s-f { width: 158px; letter-spacing: .4px; }
.s-g { width: 41px; padding-left: 8px; }
.taskbar { height: 5px; background: #404040; flex: none; }
.taskbar i { width: 34px; height: 5px; margin-left: 367px; background: #5c5c5c; }

.ctxmenu { position: absolute; left: 1082px; top: 214px; width: 312px; height: 734px; padding: 3px 2px; background: #f0f0f0; border: 1px solid #cfcfcf; box-shadow: 2px 2px 3px rgba(0,0,0,.35); font-size: 15.400px; }
.mi { height: 24px; line-height: 23px; display: flex; white-space: nowrap; color: #101a28; }
.mc { width: 24px; height: 24px; margin-right: 10px; flex: none; display: flex; align-items: center; justify-content: center; }
.ck .mc { background: #90c8f8; }
.mk { width: 14px; height: 14px; }
.msep { height: 8px; margin-left: 30px; margin-right: 1px; border-top: 0; background: linear-gradient(#d4d4d4, #d4d4d4) 0 3px / 100% 1px no-repeat; }

.redarrow { position: absolute; left: 1634px; top: 548px; width: 80px; height: 76px; }
.wm { position: absolute; left: 1773px; top: 1015px; font-size: 18px; line-height: 26px; color: rgba(110,110,110,.42); white-space: nowrap; }
```
